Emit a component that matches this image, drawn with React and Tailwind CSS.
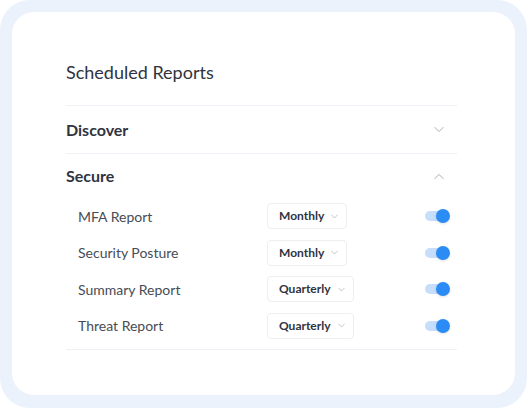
import { useState } from 'react';

const reports = [
  { id: 'mfa', name: 'MFA Report', freq: 'Monthly' },
  { id: 'posture', name: 'Security Posture', freq: 'Monthly' },
  { id: 'summary', name: 'Summary Report', freq: 'Quarterly' },
  { id: 'threat', name: 'Threat Report', freq: 'Quarterly' },
];

function Chevron({ up = false, className = '' }) {
  return (
    <svg viewBox="0 0 12 8" className={className} fill="none" stroke="currentColor" strokeWidth="1.2" strokeLinecap="round" strokeLinejoin="round">
      <path d={up ? 'M1 6.5L6 1.5l5 5' : 'M1 1.5l5 5 5-5'} />
    </svg>
  );
}

function Toggle({ on, onChange }) {
  return (
    <button className="relative w-[25px] h-[14px] flex items-center" onClick={() => onChange(!on)} aria-label="toggle">
      <span className={`w-[21px] h-[10px] rounded-full ${on ? 'bg-[#c6ddfb]' : 'bg-gray-200'}`} />
      <span className={`absolute top-0 w-[14px] h-[14px] rounded-full shadow-sm ${on ? 'left-[11px] bg-[#2b8cf6]' : 'left-0 bg-white'}`} />
    </button>
  );
}

export default function App() {
  const [enabled, setEnabled] = useState({ mfa: true, posture: true, summary: true, threat: true });

  return (
    <div className="w-[527px] h-[408px] bg-white">
      <div className="w-full h-full rounded-[30px] bg-[#ebf2fb] p-3" style={{ fontFamily: 'Lato, "Open Sans", sans-serif' }}>
        <div className="w-[503px] h-[383px] rounded-[22px] bg-white pl-[54px] pr-[58px] pt-[48px]">
          {/* Header */}
          <h1 className="text-[18px] leading-6 text-[#2f3440] pb-[21px] border-b border-[#f0f1f6]">Scheduled Reports</h1>

          {/* Discover (collapsed) */}
          <div className="h-[48px] flex items-center justify-between border-b border-[#f0f1f6] pr-[13px]">
            <span className="text-[16px] font-bold text-[#2f3440]">Discover</span>
            <Chevron className="w-[10px] h-[7px] text-[#a9adb5]" />
          </div>

          {/* Secure (expanded) */}
          <div className="border-b border-[#f0f1f6] pb-[5px]">
            <div className="h-[44px] flex items-center justify-between pr-[13px]">
              <span className="text-[16px] font-bold text-[#2f3440]">Secure</span>
              <Chevron up className="w-[10px] h-[7px] text-[#a9adb5]" />
            </div>
            {reports.map((r) => (
              <div key={r.id} className="h-[36.5px] flex items-center pl-3 pr-[7px]">
                <span className="w-[189px] text-[14px] text-[#474c55]">{r.name}</span>
                <button className="h-[26px] flex items-center gap-[7px] pl-[11px] pr-[8px] border border-[#eceef2] rounded-[4px]">
                  <span className="text-[12px] font-bold text-[#2f3440]">{r.freq}</span>
                  <Chevron className="w-[7px] h-[5px] text-[#a9adb5]" />
                </button>
                <div className="ml-auto">
                  <Toggle on={enabled[r.id]} onChange={(v) => setEnabled((s) => ({ ...s, [r.id]: v }))} />
                </div>
              </div>
            ))}
          </div>
        </div>
      </div>
    </div>
  );
}
